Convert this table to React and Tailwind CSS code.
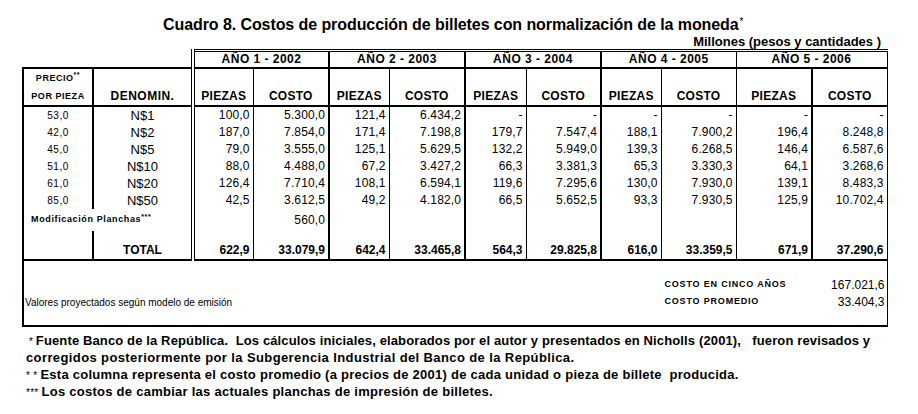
import React from 'react'

const rows = [
  ['53,0', 'N$1', '100,0', '5.300,0', '121,4', '6.434,2', '-', '-', '-', '-', '-', '-'],
  ['42,0', 'N$2', '187,0', '7.854,0', '171,4', '7.198,8', '179,7', '7.547,4', '188,1', '7.900,2', '196,4', '8.248,8'],
  ['45,0', 'N$5', '79,0', '3.555,0', '125,1', '5.629,5', '132,2', '5.949,0', '139,3', '6.268,5', '146,4', '6.587,6'],
  ['51,0', 'N$10', '88,0', '4.488,0', '67,2', '3.427,2', '66,3', '3.381,3', '65,3', '3.330,3', '64,1', '3.268,6'],
  ['61,0', 'N$20', '126,4', '7.710,4', '108,1', '6.594,1', '119,6', '7.295,6', '130,0', '7.930,0', '139,1', '8.483,3'],
  ['85,0', 'N$50', '42,5', '3.612,5', '49,2', '4.182,0', '66,5', '5.652,5', '93,3', '7.930,5', '125,9', '10.702,4'],
]
const totals = ['622,9', '33.079,9', '642,4', '33.465,8', '564,3', '29.825,8', '616,0', '33.359,5', '671,9', '37.290,6']

const widths = [70, 100, 60, 76, 60, 76, 61, 75, 60, 75, 76, 75]
// right border of each column
const rb = [
  'border-l-2 border-r-2',
  'border-r-4 border-double',
  'border-r',
  'border-r-2',
  'border-r',
  'border-r-2',
  'border-r',
  'border-r-2',
  'border-r',
  'border-r',
  'border-r-2',
  'border-r',
]
const years = [
  ['AÑO 1 - 2002', 'border-r-2'],
  ['AÑO 2 - 2003', 'border-r-2'],
  ['AÑO 3 - 2004', 'border-r-2'],
  ['AÑO 4 - 2005', 'border-r'],
  ['AÑO 5 - 2006', 'border-r'],
]

export default function App() {
  return (
    <div className="w-[918px] h-[414px] bg-white text-black font-['Liberation_Sans',Arial,sans-serif] pt-[15px] overflow-hidden">
      <div className="h-[20px] leading-[20px] text-[16px] font-bold pl-[163px] whitespace-nowrap tracking-[-0.005em]">
        Cuadro 8. Costos de producción de billetes con normalización de la moneda<span className="text-[10px] font-normal relative top-[-5px] ml-[1px]">*</span>
      </div>
      <div className="h-[14px] leading-[14px] text-[13px] font-bold text-right w-[881px] whitespace-pre">
        Millones (pesos y cantidades )
      </div>

      <table className="ml-[22px] table-fixed border-collapse border-black">
        <colgroup>
          {widths.map((w, i) => <col key={i} style={{ width: w }} />)}
        </colgroup>
        <tbody>
          <tr className="h-[17px]">
            <td colSpan={2} className="p-0 border-r-4 border-double border-black"></td>
            {years.map(([y, b]) => (
              <td key={y} colSpan={2} className={`p-0 text-center text-[12px] font-bold tracking-[0.04em] leading-none border-t-[3px] border-double border-b-2 border-black ${b}`}>{y}</td>
            ))}
          </tr>
          <tr className="h-[33px]">
            <td className="p-0 border-t-2 border-b-2 border-l-2 border-r-2 border-black text-center align-middle text-[9px] font-bold tracking-[0.06em] leading-[18px]">
              PRECIO<sup className="text-[7px]">**</sup><br />POR PIEZA
            </td>
            <td className="p-0 pb-[1px] border-t-2 border-b-2 border-r-4 border-double border-black text-center align-bottom text-[12px] font-bold tracking-[0.04em] leading-[16px]">DENOMIN.</td>
            {Array.from({ length: 10 }).map((_, i) => (
              <td key={i} className={`p-0 pb-[1px] border-b-2 border-black text-center align-bottom text-[12px] font-bold tracking-[0.02em] leading-[16px] ${rb[i + 2]}`}>
                {i % 2 === 0 ? 'PIEZAS' : 'COSTO'}
              </td>
            ))}
          </tr>
          {rows.map((r, ri) => (
            <tr key={ri} className={ri === 0 ? 'h-[18px]' : 'h-[17px]'}>
              {r.map((v, i) => (
                <td key={i} className={`p-0 leading-[17px] border-black ${ri === 0 ? 'align-bottom' : ''} ${rb[i]} ${i === 0 ? 'text-center text-[10px] tracking-[0.05em]' : i === 1 ? 'text-center text-[13px]' : 'text-right pr-[3px] text-[12px] tracking-[0.01em]'}`}>{v}</td>
              ))}
            </tr>
          ))}
          <tr className="h-[22px]">
            <td colSpan={2} className="p-0 pl-[7px] border-l-2 border-r-4 border-double border-black text-[9px] font-bold tracking-[0.07em] leading-none whitespace-nowrap">
              Modificación Planchas<sup className="text-[7px]">***</sup>
            </td>
            {Array.from({ length: 10 }).map((_, i) => (
              <td key={i} className={`p-0 text-right pr-[3px] text-[12px] tracking-[0.01em] leading-none border-black ${rb[i + 2]}`}>{i === 1 ? '560,0' : ''}</td>
            ))}
          </tr>
          <tr className="h-[11px]">
            {widths.map((_, i) => <td key={i} className={`p-0 border-black ${rb[i]}`}></td>)}
          </tr>
          <tr className="h-[18px]">
            <td className="p-0 border-l-2 border-r-2 border-b-2 border-black"></td>
            <td className="p-0 border-r-4 border-double border-b-2 border-black text-center text-[12px] font-bold leading-none">TOTAL</td>
            {totals.map((v, i) => (
              <td key={i} className={`p-0 border-b-2 border-black text-right pr-[3px] text-[12px] font-bold leading-none ${rb[i + 2]}`}>{v}</td>
            ))}
          </tr>
          <tr>
            <td colSpan={12} className="p-0 h-[66px] border-l-2 border-r border-b-2 border-black align-top">
              <div className="pt-[16px]">
                <div className="flex h-[17px] items-center">
                  <div className="ml-auto w-[222px] pr-[2px] flex justify-between items-center">
                    <span className="text-[9px] font-bold tracking-[0.09em]">COSTO EN CINCO AÑOS</span>
                    <span className="text-[12px]">167.021,6</span>
                  </div>
                </div>
                <div className="flex h-[17px] items-center">
                  <span className="pl-[1px] text-[10px]">Valores proyectados según modelo de emisión</span>
                  <div className="ml-auto w-[222px] pr-[2px] flex justify-between items-center">
                    <span className="text-[9px] font-bold tracking-[0.09em]">COSTO PROMEDIO</span>
                    <span className="text-[12px]">33.404,3</span>
                  </div>
                </div>
              </div>
            </td>
          </tr>
        </tbody>
      </table>

      <div className="mt-[6px] pl-[26px] text-[13px] font-bold leading-[16.5px] tracking-[0.02em] whitespace-pre">
        <div className="tracking-[0.01em]"><span className="font-normal text-[10px]"> * </span>Fuente Banco de la República.  Los cálculos iniciales, elaborados por el autor y presentados en Nicholls (2001),   fueron revisados y</div>
        <div className="tracking-[0.03em]">corregidos posteriormente por la Subgerencia Industrial del Banco de la República.</div>
        <div><span className="font-normal text-[10px]">* * </span>Esta columna representa el costo promedio (a precios de 2001) de cada unidad o pieza de billete  producida.</div>
        <div><span className="font-normal text-[10px]">*** </span>Los costos de cambiar las actuales planchas de impresión de billetes.</div>
      </div>
    </div>
  )
}
